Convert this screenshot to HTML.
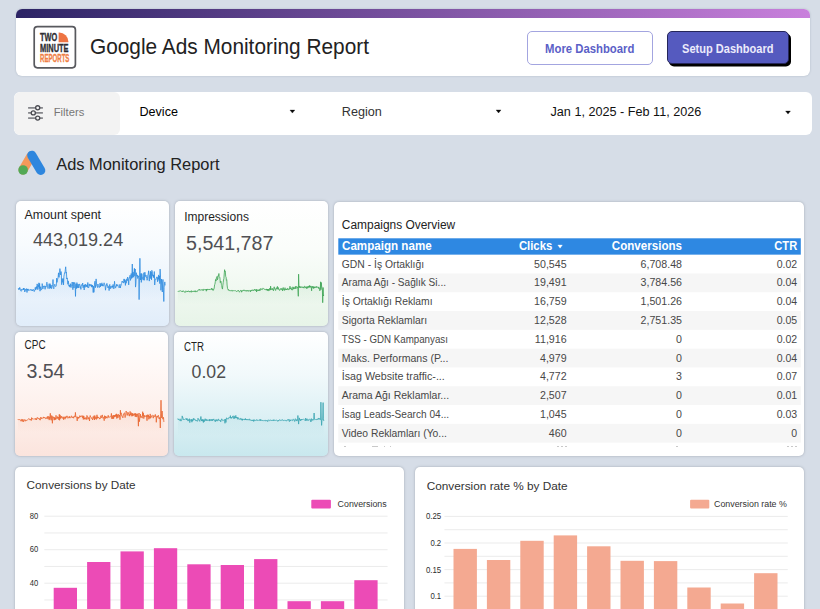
<!DOCTYPE html>
<html><head><meta charset="utf-8"><title>Google Ads Monitoring Report</title>
<style>
html,body{margin:0;padding:0}
body{width:820px;height:609px;overflow:hidden;background:#d6dde7;position:relative;font-family:"Liberation Sans",sans-serif}
.b{position:absolute;box-sizing:border-box}
.t{position:absolute;white-space:nowrap;font-family:"Liberation Sans",sans-serif}
</style></head><body>
<div class="b" style="left:16px;top:9px;width:794.3px;height:67px;background:#fff;border-radius:6px;overflow:hidden;box-shadow:0 0 2px rgba(60,70,90,.25);"><div style="height:8.5px;background:linear-gradient(90deg,#2c2465 0%,#c980dc 100%)"></div></div>
<svg class="b" style="left:32px;top:24px" width="46" height="46" viewBox="32 24 46 46">
<rect x="34.2" y="26.6" width="41.2" height="41.2" rx="3.2" fill="#fff" stroke="#58595e" stroke-width="1.7"/>
<path d="M58.6 42.2 V32.4 H59.2 A9.4 9.4 0 0 1 68.4 41.6 V42.2 Z" fill="#ee7443"/>
<g font-family="'Liberation Sans', sans-serif" font-weight="700" font-size="11.6" stroke-width=".35" paint-order="stroke">
<text x="40" y="41.4" textLength="17.2" lengthAdjust="spacingAndGlyphs" fill="#2e2e33" stroke="#2e2e33">TWO</text>
<text x="40" y="52.2" textLength="28.6" lengthAdjust="spacingAndGlyphs" fill="#2e2e33" stroke="#2e2e33">MINUTE</text>
<text x="40" y="62" textLength="29.4" lengthAdjust="spacingAndGlyphs" fill="#f07f45" stroke="#f07f45">REPORTS</text>
</g></svg>
<div class="b" style="left:527px;top:31px;width:126px;height:34px;border:1px solid #a3a5e0;border-radius:5px;background:#fff;"></div>
<div class="b" style="left:666.6px;top:31.3px;width:122.89999999999998px;height:32.7px;background:#555abf;border-radius:5px;border:1px solid #25265a;box-shadow:2px 2.5px 0 #000;"></div>
<div class="b" style="left:14px;top:91.5px;width:798px;height:43.099999999999994px;background:#fff;border-radius:6px;overflow:hidden;"><div style="width:106px;height:100%;background:#f3f3f3;border-radius:6px"></div></div>
<svg class="b" style="left:26px;top:103px" width="20" height="20" viewBox="26 103 20 20" fill="none">
<path d="M28.1 107.8H42.9M28.1 112.9H42.9M28.1 118.1H42.9" stroke="#85868b" stroke-width="1.7"/>
<g fill="#f3f3f3" stroke="#494a51" stroke-width="1.3"><circle cx="37.7" cy="107.8" r="2.05"/><circle cx="33.3" cy="112.9" r="2.05"/><circle cx="37.7" cy="118.1" r="2.05"/></g></svg>
<svg class="b" style="left:0;top:100px" width="820" height="24" viewBox="0 100 820 24"><path d="M289.95 110.05 H294.85 L292.40 113.10 Z" fill="#0a0a0a" stroke="#0a0a0a" stroke-width=".3" stroke-linejoin="round"/></svg>
<svg class="b" style="left:0;top:100px" width="820" height="24" viewBox="0 100 820 24"><path d="M496.10 109.95 H501.00 L498.55 113.00 Z" fill="#0a0a0a" stroke="#0a0a0a" stroke-width=".3" stroke-linejoin="round"/></svg>
<svg class="b" style="left:0;top:100px" width="820" height="24" viewBox="0 100 820 24"><path d="M785.55 111.05 H790.45 L788.00 114.10 Z" fill="#0a0a0a" stroke="#0a0a0a" stroke-width=".3" stroke-linejoin="round"/></svg>
<svg class="b" style="left:16px;top:148px" width="32" height="30" viewBox="16 148 32 30">
<path d="M30.9 156.4 L23.1 169.9" stroke="#f4995b" stroke-width="9.2" stroke-linecap="round"/>
<path d="M31.8 155.3 L40.7 170.3" stroke="#2e86de" stroke-width="9.2" stroke-linecap="round"/>
<circle cx="23.1" cy="170" r="4.8" fill="#52a956"/></svg>
<div class="b" style="left:15.5px;top:201px;width:153.7px;height:124.80000000000001px;box-shadow:0 0 2.5px rgba(60,68,82,.36);border-radius:5px;background:linear-gradient(180deg,#fff 0%,#f7fbfe 35%,#e1edfa 100%);"></div>
<div class="b" style="left:174.9px;top:201px;width:153.1px;height:124.80000000000001px;box-shadow:0 0 2.5px rgba(60,68,82,.36);border-radius:5px;background:linear-gradient(180deg,#fff 0%,#fafdfa 38%,#e7f4e8 100%);"></div>
<div class="b" style="left:15.3px;top:331.6px;width:153.1px;height:124.39999999999998px;box-shadow:0 0 2.5px rgba(60,68,82,.36);border-radius:5px;background:linear-gradient(180deg,#fff 0%,#fff8f6 30%,#fdeee9 70%,#fbe4dd 100%);"></div>
<div class="b" style="left:174.2px;top:332px;width:153.40000000000003px;height:124px;box-shadow:0 0 2.5px rgba(60,68,82,.36);border-radius:5px;background:linear-gradient(180deg,#fff 0%,#f1f9fb 35%,#c9e8ee 100%);"></div>
<svg class="b" style="left:0;top:0" width="820" height="609" viewBox="0 0 820 609">
<defs><linearGradient id="g11" gradientUnits="userSpaceOnUse" x1="0" y1="275.4" x2="0" y2="299.4"><stop offset="0" stop-color="#2f8be0" stop-opacity=".11"/><stop offset="1" stop-color="#2f8be0" stop-opacity="0"/></linearGradient></defs><path d="M18.3 288.4 L18.7 289.6 L19.0 288.3 L19.4 289.3 L19.7 287.4 L20.1 288.3 L20.5 290.5 L20.8 290.9 L21.2 291.3 L21.6 289.1 L21.9 289.4 L22.3 289.6 L22.6 289.8 L23.0 289.9 L23.4 288.0 L23.7 289.9 L24.1 288.2 L24.5 289.4 L24.8 292.0 L25.2 289.3 L25.5 289.2 L25.9 290.5 L26.3 289.5 L26.6 288.6 L27.0 292.5 L27.3 289.0 L27.7 290.2 L28.1 288.9 L28.4 290.5 L28.8 289.9 L29.2 290.1 L29.5 289.8 L29.9 290.4 L30.2 290.3 L30.6 289.6 L31.0 289.0 L31.3 290.0 L31.7 290.7 L32.0 290.1 L32.4 290.1 L32.8 291.0 L33.1 289.2 L33.5 289.7 L33.9 290.3 L34.2 291.6 L34.6 291.0 L34.9 289.6 L35.3 287.3 L35.7 290.0 L36.0 289.1 L36.4 286.6 L36.8 288.6 L37.1 283.9 L37.5 285.4 L37.8 289.7 L38.2 285.2 L38.6 286.7 L38.9 282.8 L39.3 288.7 L39.6 283.5 L40.0 291.2 L40.4 287.9 L40.7 286.7 L41.1 290.1 L41.5 289.5 L41.8 289.3 L42.2 283.6 L42.5 285.5 L42.9 288.9 L43.3 286.1 L43.6 286.1 L44.0 286.9 L44.4 285.8 L44.7 286.3 L45.1 289.3 L45.4 286.3 L45.8 287.3 L46.2 287.0 L46.5 283.7 L46.9 282.2 L47.2 283.7 L47.6 286.9 L48.0 288.6 L48.3 287.6 L48.7 286.3 L49.1 283.7 L49.4 284.8 L49.8 288.7 L50.1 283.7 L50.5 288.0 L50.9 285.1 L51.2 285.1 L51.6 288.7 L51.9 287.6 L52.3 286.1 L52.7 284.5 L53.0 279.5 L53.4 287.6 L53.8 288.8 L54.1 286.7 L54.5 285.6 L54.8 284.2 L55.2 286.2 L55.6 286.5 L55.9 286.5 L56.3 285.8 L56.7 278.1 L57.0 282.4 L57.4 279.4 L57.7 279.4 L58.1 277.2 L58.5 272.8 L58.8 277.1 L59.2 277.3 L59.5 272.7 L59.9 268.6 L60.3 271.9 L60.6 274.9 L61.0 271.5 L61.4 273.2 L61.7 284.7 L62.1 278.6 L62.4 281.8 L62.8 282.4 L63.2 278.5 L63.5 284.9 L63.9 276.2 L64.3 274.2 L64.6 272.7 L65.0 273.2 L65.3 269.7 L65.7 266.8 L66.1 272.7 L66.4 272.0 L66.8 279.1 L67.1 277.9 L67.5 279.4 L67.9 284.3 L68.2 280.9 L68.6 283.1 L69.0 286.2 L69.3 285.0 L69.7 287.0 L70.0 287.1 L70.4 283.7 L70.8 287.3 L71.1 287.6 L71.5 284.8 L71.8 284.9 L72.2 282.0 L72.6 286.5 L72.9 289.7 L73.3 282.2 L73.7 284.8 L74.0 288.0 L74.4 284.2 L74.7 282.4 L75.1 283.5 L75.5 296.4 L75.8 285.0 L76.2 283.9 L76.6 288.6 L76.9 282.6 L77.3 285.4 L77.6 287.8 L78.0 284.1 L78.4 286.1 L78.7 288.0 L79.1 284.2 L79.4 283.9 L79.8 285.0 L80.2 287.5 L80.5 286.7 L80.9 289.4 L81.3 284.6 L81.6 285.2 L82.0 285.4 L82.3 285.5 L82.7 283.0 L83.1 287.8 L83.4 285.5 L83.8 285.2 L84.2 290.0 L84.5 284.7 L84.9 287.2 L85.2 287.3 L85.6 284.2 L86.0 286.1 L86.3 286.8 L86.7 284.9 L87.0 286.3 L87.4 287.2 L87.8 282.5 L88.1 288.0 L88.5 287.5 L88.9 287.5 L89.2 283.9 L89.6 285.5 L89.9 284.8 L90.3 285.7 L90.7 284.5 L91.0 284.2 L91.4 286.8 L91.7 284.9 L92.1 287.3 L92.5 285.1 L92.8 287.3 L93.2 292.5 L93.6 286.2 L93.9 292.3 L94.3 287.0 L94.6 282.5 L95.0 281.2 L95.4 287.7 L95.7 284.4 L96.1 278.9 L96.5 283.0 L96.8 286.0 L97.2 286.6 L97.5 287.5 L97.9 284.0 L98.3 285.4 L98.6 286.6 L99.0 287.3 L99.3 287.7 L99.7 285.8 L100.1 283.1 L100.4 286.9 L100.8 284.2 L101.2 285.8 L101.5 285.1 L101.9 282.8 L102.2 286.1 L102.6 284.3 L103.0 285.9 L103.3 286.2 L103.7 285.2 L104.1 282.8 L104.4 284.5 L104.8 285.0 L105.1 286.0 L105.5 290.2 L105.9 287.0 L106.2 284.6 L106.6 285.2 L106.9 283.4 L107.3 286.2 L107.7 285.6 L108.0 288.0 L108.4 286.4 L108.8 286.8 L109.1 290.6 L109.5 285.1 L109.8 284.4 L110.2 288.9 L110.6 286.3 L110.9 286.7 L111.3 286.3 L111.7 286.2 L112.0 288.2 L112.4 285.8 L112.7 287.0 L113.1 284.4 L113.5 285.8 L113.8 288.9 L114.2 286.3 L114.5 281.3 L114.9 284.7 L115.3 287.5 L115.6 288.1 L116.0 286.0 L116.4 286.1 L116.7 284.2 L117.1 286.1 L117.4 285.2 L117.8 284.7 L118.2 286.3 L118.5 286.7 L118.9 287.4 L119.2 287.9 L119.6 285.2 L120.0 284.3 L120.3 288.0 L120.7 286.0 L121.1 285.3 L121.4 283.4 L121.8 283.0 L122.1 281.0 L122.5 282.0 L122.9 281.9 L123.2 282.3 L123.6 283.1 L124.0 278.9 L124.3 282.3 L124.7 279.4 L125.0 279.9 L125.4 285.4 L125.8 280.4 L126.1 283.3 L126.5 282.7 L126.8 278.8 L127.2 280.8 L127.6 277.0 L127.9 277.6 L128.3 279.0 L128.7 284.9 L129.0 279.3 L129.4 278.2 L129.7 276.7 L130.1 275.2 L130.5 280.4 L130.8 278.6 L131.2 273.5 L131.6 278.5 L131.9 275.6 L132.3 264.0 L132.6 277.6 L133.0 272.0 L133.4 273.9 L133.7 277.2 L134.1 270.7 L134.4 268.3 L134.8 275.9 L135.2 269.0 L135.5 287.1 L135.9 283.8 L136.3 272.7 L136.6 274.7 L137.0 276.3 L137.3 274.9 L137.7 278.5 L138.1 277.4 L138.4 275.8 L138.8 277.9 L139.1 299.6 L139.5 277.3 L139.9 258.3 L140.2 272.4 L140.6 280.0 L141.0 273.6 L141.3 282.4 L141.7 273.5 L142.0 274.2 L142.4 278.5 L142.8 277.6 L143.1 280.1 L143.5 278.4 L143.9 272.7 L144.2 280.3 L144.6 274.4 L144.9 272.2 L145.3 275.1 L145.7 276.6 L146.0 275.1 L146.4 277.4 L146.7 277.0 L147.1 280.3 L147.5 278.6 L147.8 274.8 L148.2 274.3 L148.6 270.8 L148.9 275.6 L149.3 281.1 L149.6 275.3 L150.0 275.4 L150.4 271.2 L150.7 278.6 L151.1 272.0 L151.5 279.8 L151.8 270.3 L152.2 271.2 L152.5 275.6 L152.9 274.7 L153.3 277.3 L153.6 275.0 L154.0 277.8 L154.3 271.5 L154.7 285.0 L155.1 280.1 L155.4 279.6 L155.8 279.9 L156.2 277.9 L156.5 278.0 L156.9 276.8 L157.2 276.9 L157.6 281.8 L158.0 277.6 L158.3 279.0 L158.7 274.9 L159.0 280.5 L159.4 276.0 L159.8 283.6 L160.1 269.1 L160.5 277.2 L160.9 290.3 L161.2 285.9 L161.6 279.0 L161.9 282.9 L162.3 292.0 L162.7 281.8 L163.0 279.5 L163.4 289.9 L163.8 301.5 L164.1 287.3 L164.5 284.0 L164.8 281.9 L165.2 285.4 L165.2 312 L18.3 312 Z" fill="url(#g11)" stroke="none"/><path d="M18.3 288.4 L18.7 289.6 L19.0 288.3 L19.4 289.3 L19.7 287.4 L20.1 288.3 L20.5 290.5 L20.8 290.9 L21.2 291.3 L21.6 289.1 L21.9 289.4 L22.3 289.6 L22.6 289.8 L23.0 289.9 L23.4 288.0 L23.7 289.9 L24.1 288.2 L24.5 289.4 L24.8 292.0 L25.2 289.3 L25.5 289.2 L25.9 290.5 L26.3 289.5 L26.6 288.6 L27.0 292.5 L27.3 289.0 L27.7 290.2 L28.1 288.9 L28.4 290.5 L28.8 289.9 L29.2 290.1 L29.5 289.8 L29.9 290.4 L30.2 290.3 L30.6 289.6 L31.0 289.0 L31.3 290.0 L31.7 290.7 L32.0 290.1 L32.4 290.1 L32.8 291.0 L33.1 289.2 L33.5 289.7 L33.9 290.3 L34.2 291.6 L34.6 291.0 L34.9 289.6 L35.3 287.3 L35.7 290.0 L36.0 289.1 L36.4 286.6 L36.8 288.6 L37.1 283.9 L37.5 285.4 L37.8 289.7 L38.2 285.2 L38.6 286.7 L38.9 282.8 L39.3 288.7 L39.6 283.5 L40.0 291.2 L40.4 287.9 L40.7 286.7 L41.1 290.1 L41.5 289.5 L41.8 289.3 L42.2 283.6 L42.5 285.5 L42.9 288.9 L43.3 286.1 L43.6 286.1 L44.0 286.9 L44.4 285.8 L44.7 286.3 L45.1 289.3 L45.4 286.3 L45.8 287.3 L46.2 287.0 L46.5 283.7 L46.9 282.2 L47.2 283.7 L47.6 286.9 L48.0 288.6 L48.3 287.6 L48.7 286.3 L49.1 283.7 L49.4 284.8 L49.8 288.7 L50.1 283.7 L50.5 288.0 L50.9 285.1 L51.2 285.1 L51.6 288.7 L51.9 287.6 L52.3 286.1 L52.7 284.5 L53.0 279.5 L53.4 287.6 L53.8 288.8 L54.1 286.7 L54.5 285.6 L54.8 284.2 L55.2 286.2 L55.6 286.5 L55.9 286.5 L56.3 285.8 L56.7 278.1 L57.0 282.4 L57.4 279.4 L57.7 279.4 L58.1 277.2 L58.5 272.8 L58.8 277.1 L59.2 277.3 L59.5 272.7 L59.9 268.6 L60.3 271.9 L60.6 274.9 L61.0 271.5 L61.4 273.2 L61.7 284.7 L62.1 278.6 L62.4 281.8 L62.8 282.4 L63.2 278.5 L63.5 284.9 L63.9 276.2 L64.3 274.2 L64.6 272.7 L65.0 273.2 L65.3 269.7 L65.7 266.8 L66.1 272.7 L66.4 272.0 L66.8 279.1 L67.1 277.9 L67.5 279.4 L67.9 284.3 L68.2 280.9 L68.6 283.1 L69.0 286.2 L69.3 285.0 L69.7 287.0 L70.0 287.1 L70.4 283.7 L70.8 287.3 L71.1 287.6 L71.5 284.8 L71.8 284.9 L72.2 282.0 L72.6 286.5 L72.9 289.7 L73.3 282.2 L73.7 284.8 L74.0 288.0 L74.4 284.2 L74.7 282.4 L75.1 283.5 L75.5 296.4 L75.8 285.0 L76.2 283.9 L76.6 288.6 L76.9 282.6 L77.3 285.4 L77.6 287.8 L78.0 284.1 L78.4 286.1 L78.7 288.0 L79.1 284.2 L79.4 283.9 L79.8 285.0 L80.2 287.5 L80.5 286.7 L80.9 289.4 L81.3 284.6 L81.6 285.2 L82.0 285.4 L82.3 285.5 L82.7 283.0 L83.1 287.8 L83.4 285.5 L83.8 285.2 L84.2 290.0 L84.5 284.7 L84.9 287.2 L85.2 287.3 L85.6 284.2 L86.0 286.1 L86.3 286.8 L86.7 284.9 L87.0 286.3 L87.4 287.2 L87.8 282.5 L88.1 288.0 L88.5 287.5 L88.9 287.5 L89.2 283.9 L89.6 285.5 L89.9 284.8 L90.3 285.7 L90.7 284.5 L91.0 284.2 L91.4 286.8 L91.7 284.9 L92.1 287.3 L92.5 285.1 L92.8 287.3 L93.2 292.5 L93.6 286.2 L93.9 292.3 L94.3 287.0 L94.6 282.5 L95.0 281.2 L95.4 287.7 L95.7 284.4 L96.1 278.9 L96.5 283.0 L96.8 286.0 L97.2 286.6 L97.5 287.5 L97.9 284.0 L98.3 285.4 L98.6 286.6 L99.0 287.3 L99.3 287.7 L99.7 285.8 L100.1 283.1 L100.4 286.9 L100.8 284.2 L101.2 285.8 L101.5 285.1 L101.9 282.8 L102.2 286.1 L102.6 284.3 L103.0 285.9 L103.3 286.2 L103.7 285.2 L104.1 282.8 L104.4 284.5 L104.8 285.0 L105.1 286.0 L105.5 290.2 L105.9 287.0 L106.2 284.6 L106.6 285.2 L106.9 283.4 L107.3 286.2 L107.7 285.6 L108.0 288.0 L108.4 286.4 L108.8 286.8 L109.1 290.6 L109.5 285.1 L109.8 284.4 L110.2 288.9 L110.6 286.3 L110.9 286.7 L111.3 286.3 L111.7 286.2 L112.0 288.2 L112.4 285.8 L112.7 287.0 L113.1 284.4 L113.5 285.8 L113.8 288.9 L114.2 286.3 L114.5 281.3 L114.9 284.7 L115.3 287.5 L115.6 288.1 L116.0 286.0 L116.4 286.1 L116.7 284.2 L117.1 286.1 L117.4 285.2 L117.8 284.7 L118.2 286.3 L118.5 286.7 L118.9 287.4 L119.2 287.9 L119.6 285.2 L120.0 284.3 L120.3 288.0 L120.7 286.0 L121.1 285.3 L121.4 283.4 L121.8 283.0 L122.1 281.0 L122.5 282.0 L122.9 281.9 L123.2 282.3 L123.6 283.1 L124.0 278.9 L124.3 282.3 L124.7 279.4 L125.0 279.9 L125.4 285.4 L125.8 280.4 L126.1 283.3 L126.5 282.7 L126.8 278.8 L127.2 280.8 L127.6 277.0 L127.9 277.6 L128.3 279.0 L128.7 284.9 L129.0 279.3 L129.4 278.2 L129.7 276.7 L130.1 275.2 L130.5 280.4 L130.8 278.6 L131.2 273.5 L131.6 278.5 L131.9 275.6 L132.3 264.0 L132.6 277.6 L133.0 272.0 L133.4 273.9 L133.7 277.2 L134.1 270.7 L134.4 268.3 L134.8 275.9 L135.2 269.0 L135.5 287.1 L135.9 283.8 L136.3 272.7 L136.6 274.7 L137.0 276.3 L137.3 274.9 L137.7 278.5 L138.1 277.4 L138.4 275.8 L138.8 277.9 L139.1 299.6 L139.5 277.3 L139.9 258.3 L140.2 272.4 L140.6 280.0 L141.0 273.6 L141.3 282.4 L141.7 273.5 L142.0 274.2 L142.4 278.5 L142.8 277.6 L143.1 280.1 L143.5 278.4 L143.9 272.7 L144.2 280.3 L144.6 274.4 L144.9 272.2 L145.3 275.1 L145.7 276.6 L146.0 275.1 L146.4 277.4 L146.7 277.0 L147.1 280.3 L147.5 278.6 L147.8 274.8 L148.2 274.3 L148.6 270.8 L148.9 275.6 L149.3 281.1 L149.6 275.3 L150.0 275.4 L150.4 271.2 L150.7 278.6 L151.1 272.0 L151.5 279.8 L151.8 270.3 L152.2 271.2 L152.5 275.6 L152.9 274.7 L153.3 277.3 L153.6 275.0 L154.0 277.8 L154.3 271.5 L154.7 285.0 L155.1 280.1 L155.4 279.6 L155.8 279.9 L156.2 277.9 L156.5 278.0 L156.9 276.8 L157.2 276.9 L157.6 281.8 L158.0 277.6 L158.3 279.0 L158.7 274.9 L159.0 280.5 L159.4 276.0 L159.8 283.6 L160.1 269.1 L160.5 277.2 L160.9 290.3 L161.2 285.9 L161.6 279.0 L161.9 282.9 L162.3 292.0 L162.7 281.8 L163.0 279.5 L163.4 289.9 L163.8 301.5 L164.1 287.3 L164.5 284.0 L164.8 281.9 L165.2 285.4" fill="none" stroke="#2f8be0" stroke-width="0.8" stroke-linejoin="round"/>
<defs><linearGradient id="g22" gradientUnits="userSpaceOnUse" x1="0" y1="280.6" x2="0" y2="304.6"><stop offset="0" stop-color="#3fa556" stop-opacity=".11"/><stop offset="1" stop-color="#3fa556" stop-opacity="0"/></linearGradient></defs><path d="M177.9 291.7 L178.3 291.1 L178.6 291.3 L179.0 291.4 L179.3 291.5 L179.7 291.0 L180.1 290.4 L180.4 290.7 L180.8 291.2 L181.1 291.1 L181.5 291.2 L181.9 291.6 L182.2 292.0 L182.6 291.0 L182.9 291.1 L183.3 290.7 L183.6 291.0 L184.0 292.0 L184.4 291.9 L184.7 292.0 L185.1 292.5 L185.4 291.5 L185.8 290.8 L186.2 291.4 L186.5 291.7 L186.9 291.2 L187.2 291.2 L187.6 292.0 L188.0 290.9 L188.3 290.9 L188.7 291.1 L189.0 291.8 L189.4 292.0 L189.8 291.1 L190.1 291.7 L190.5 291.3 L190.8 291.3 L191.2 292.3 L191.6 290.7 L191.9 291.3 L192.3 291.5 L192.6 291.4 L193.0 292.0 L193.4 291.3 L193.7 290.9 L194.1 291.5 L194.4 290.8 L194.8 291.7 L195.1 291.8 L195.5 290.7 L195.9 292.1 L196.2 291.5 L196.6 291.4 L196.9 291.4 L197.3 291.6 L197.7 290.8 L198.0 289.9 L198.4 290.1 L198.7 289.7 L199.1 290.0 L199.5 289.3 L199.8 290.4 L200.2 290.2 L200.5 290.0 L200.9 289.9 L201.3 290.2 L201.6 289.6 L202.0 289.2 L202.3 289.6 L202.7 289.8 L203.1 290.8 L203.4 289.2 L203.8 289.5 L204.1 289.4 L204.5 289.6 L204.9 289.5 L205.2 289.8 L205.6 289.3 L205.9 289.0 L206.3 291.2 L206.6 289.0 L207.0 290.0 L207.4 290.0 L207.7 289.1 L208.1 289.2 L208.4 289.4 L208.8 289.8 L209.2 289.0 L209.5 289.8 L209.9 289.4 L210.2 289.5 L210.6 288.9 L211.0 289.5 L211.3 289.5 L211.7 288.1 L212.0 289.2 L212.4 289.8 L212.8 288.8 L213.1 290.5 L213.5 289.5 L213.8 289.5 L214.2 288.1 L214.6 284.7 L214.9 284.5 L215.3 281.5 L215.6 279.5 L216.0 281.1 L216.4 277.7 L216.7 277.2 L217.1 276.4 L217.4 279.8 L217.8 278.6 L218.1 275.5 L218.5 275.8 L218.9 273.5 L219.2 276.8 L219.6 277.4 L219.9 277.4 L220.3 282.7 L220.7 281.2 L221.0 281.1 L221.4 284.4 L221.7 285.4 L222.1 288.1 L222.5 289.1 L222.8 285.6 L223.2 282.6 L223.5 280.0 L223.9 278.5 L224.3 272.9 L224.6 269.7 L225.0 271.9 L225.3 271.4 L225.7 276.4 L226.1 277.2 L226.4 280.3 L226.8 279.8 L227.1 285.0 L227.5 288.3 L227.9 289.1 L228.2 290.1 L228.6 289.5 L228.9 290.6 L229.3 290.7 L229.6 290.1 L230.0 290.5 L230.4 290.8 L230.7 290.5 L231.1 290.3 L231.4 290.5 L231.8 290.4 L232.2 291.3 L232.5 290.5 L232.9 290.5 L233.2 290.7 L233.6 290.6 L234.0 290.8 L234.3 290.5 L234.7 290.8 L235.0 290.9 L235.4 290.7 L235.8 290.8 L236.1 291.2 L236.5 291.5 L236.8 291.0 L237.2 290.9 L237.6 291.1 L237.9 290.9 L238.3 290.1 L238.6 290.9 L239.0 291.4 L239.4 292.2 L239.7 291.4 L240.1 291.0 L240.4 290.4 L240.8 290.4 L241.1 290.8 L241.5 292.2 L241.9 290.4 L242.2 291.1 L242.6 291.1 L242.9 290.4 L243.3 290.4 L243.7 290.6 L244.0 289.8 L244.4 290.8 L244.7 290.9 L245.1 290.3 L245.5 290.7 L245.8 290.4 L246.2 291.4 L246.5 290.8 L246.9 290.1 L247.3 290.8 L247.6 290.6 L248.0 291.3 L248.3 290.4 L248.7 291.2 L249.1 291.0 L249.4 290.8 L249.8 290.5 L250.1 290.7 L250.5 291.8 L250.9 290.0 L251.2 290.7 L251.6 289.9 L251.9 290.7 L252.3 290.4 L252.6 290.5 L253.0 289.7 L253.4 290.3 L253.7 290.8 L254.1 289.9 L254.4 289.7 L254.8 289.1 L255.2 290.6 L255.5 290.5 L255.9 290.5 L256.2 289.2 L256.6 292.0 L257.0 289.6 L257.3 290.6 L257.7 290.0 L258.0 290.3 L258.4 291.0 L258.8 289.5 L259.1 289.3 L259.5 289.4 L259.8 291.0 L260.2 289.6 L260.6 288.6 L260.9 289.6 L261.3 288.8 L261.6 289.3 L262.0 289.6 L262.3 289.6 L262.7 288.4 L263.1 288.7 L263.4 288.3 L263.8 288.6 L264.1 289.2 L264.5 289.3 L264.9 289.1 L265.2 289.7 L265.6 289.7 L265.9 289.6 L266.3 288.9 L266.7 290.2 L267.0 289.0 L267.4 290.5 L267.7 289.0 L268.1 290.6 L268.5 289.1 L268.8 290.8 L269.2 290.6 L269.5 290.0 L269.9 288.1 L270.3 290.1 L270.6 286.1 L271.0 289.5 L271.3 289.0 L271.7 289.5 L272.1 288.3 L272.4 289.5 L272.8 288.7 L273.1 290.1 L273.5 290.8 L273.8 288.7 L274.2 286.8 L274.6 288.7 L274.9 288.6 L275.3 289.9 L275.6 290.5 L276.0 288.5 L276.4 287.7 L276.7 288.9 L277.1 289.3 L277.4 286.4 L277.8 289.0 L278.2 288.6 L278.5 287.6 L278.9 289.8 L279.2 289.4 L279.6 290.5 L280.0 289.6 L280.3 289.5 L280.7 289.3 L281.0 288.2 L281.4 289.5 L281.8 289.5 L282.1 288.6 L282.5 290.9 L282.8 289.1 L283.2 287.5 L283.6 289.6 L283.9 290.2 L284.3 289.4 L284.6 290.4 L285.0 287.7 L285.3 289.7 L285.7 289.4 L286.1 290.0 L286.4 289.0 L286.8 289.8 L287.1 288.4 L287.5 288.4 L287.9 289.8 L288.2 289.9 L288.6 288.8 L288.9 289.1 L289.3 289.4 L289.7 287.3 L290.0 286.2 L290.4 289.1 L290.7 288.1 L291.1 287.6 L291.5 289.5 L291.8 288.8 L292.2 290.2 L292.5 288.3 L292.9 286.8 L293.3 287.6 L293.6 289.2 L294.0 287.3 L294.3 288.9 L294.7 288.5 L295.1 287.3 L295.4 286.3 L295.8 288.9 L296.1 287.3 L296.5 286.6 L296.8 286.3 L297.2 288.1 L297.6 287.3 L297.9 287.9 L298.3 296.3 L298.6 274.2 L299.0 287.7 L299.4 286.1 L299.7 287.5 L300.1 286.7 L300.4 286.6 L300.8 288.0 L301.2 287.2 L301.5 287.1 L301.9 286.6 L302.2 287.5 L302.6 287.2 L303.0 287.8 L303.3 287.0 L303.7 287.0 L304.0 288.2 L304.4 286.2 L304.8 286.2 L305.1 286.7 L305.5 287.6 L305.8 288.1 L306.2 286.7 L306.6 288.6 L306.9 288.0 L307.3 286.4 L307.6 288.2 L308.0 287.9 L308.3 287.7 L308.7 286.1 L309.1 287.5 L309.4 285.5 L309.8 287.2 L310.1 285.8 L310.5 287.3 L310.9 286.4 L311.2 286.3 L311.6 290.8 L311.9 287.0 L312.3 286.1 L312.7 287.8 L313.0 288.1 L313.4 286.6 L313.7 288.6 L314.1 286.6 L314.5 288.0 L314.8 287.2 L315.2 286.9 L315.5 287.6 L315.9 286.8 L316.3 286.3 L316.6 287.6 L317.0 286.8 L317.3 287.2 L317.7 287.2 L318.1 287.5 L318.4 286.9 L318.8 288.7 L319.1 287.6 L319.5 288.3 L319.8 290.8 L320.2 289.7 L320.6 281.8 L320.9 289.7 L321.3 282.5 L321.6 286.1 L322.0 288.0 L322.4 290.0 L322.7 302.7 L323.1 287.5 L323.4 296.0 L323.8 294.9 L323.8 312 L177.9 312 Z" fill="url(#g22)" stroke="none"/><path d="M177.9 291.7 L178.3 291.1 L178.6 291.3 L179.0 291.4 L179.3 291.5 L179.7 291.0 L180.1 290.4 L180.4 290.7 L180.8 291.2 L181.1 291.1 L181.5 291.2 L181.9 291.6 L182.2 292.0 L182.6 291.0 L182.9 291.1 L183.3 290.7 L183.6 291.0 L184.0 292.0 L184.4 291.9 L184.7 292.0 L185.1 292.5 L185.4 291.5 L185.8 290.8 L186.2 291.4 L186.5 291.7 L186.9 291.2 L187.2 291.2 L187.6 292.0 L188.0 290.9 L188.3 290.9 L188.7 291.1 L189.0 291.8 L189.4 292.0 L189.8 291.1 L190.1 291.7 L190.5 291.3 L190.8 291.3 L191.2 292.3 L191.6 290.7 L191.9 291.3 L192.3 291.5 L192.6 291.4 L193.0 292.0 L193.4 291.3 L193.7 290.9 L194.1 291.5 L194.4 290.8 L194.8 291.7 L195.1 291.8 L195.5 290.7 L195.9 292.1 L196.2 291.5 L196.6 291.4 L196.9 291.4 L197.3 291.6 L197.7 290.8 L198.0 289.9 L198.4 290.1 L198.7 289.7 L199.1 290.0 L199.5 289.3 L199.8 290.4 L200.2 290.2 L200.5 290.0 L200.9 289.9 L201.3 290.2 L201.6 289.6 L202.0 289.2 L202.3 289.6 L202.7 289.8 L203.1 290.8 L203.4 289.2 L203.8 289.5 L204.1 289.4 L204.5 289.6 L204.9 289.5 L205.2 289.8 L205.6 289.3 L205.9 289.0 L206.3 291.2 L206.6 289.0 L207.0 290.0 L207.4 290.0 L207.7 289.1 L208.1 289.2 L208.4 289.4 L208.8 289.8 L209.2 289.0 L209.5 289.8 L209.9 289.4 L210.2 289.5 L210.6 288.9 L211.0 289.5 L211.3 289.5 L211.7 288.1 L212.0 289.2 L212.4 289.8 L212.8 288.8 L213.1 290.5 L213.5 289.5 L213.8 289.5 L214.2 288.1 L214.6 284.7 L214.9 284.5 L215.3 281.5 L215.6 279.5 L216.0 281.1 L216.4 277.7 L216.7 277.2 L217.1 276.4 L217.4 279.8 L217.8 278.6 L218.1 275.5 L218.5 275.8 L218.9 273.5 L219.2 276.8 L219.6 277.4 L219.9 277.4 L220.3 282.7 L220.7 281.2 L221.0 281.1 L221.4 284.4 L221.7 285.4 L222.1 288.1 L222.5 289.1 L222.8 285.6 L223.2 282.6 L223.5 280.0 L223.9 278.5 L224.3 272.9 L224.6 269.7 L225.0 271.9 L225.3 271.4 L225.7 276.4 L226.1 277.2 L226.4 280.3 L226.8 279.8 L227.1 285.0 L227.5 288.3 L227.9 289.1 L228.2 290.1 L228.6 289.5 L228.9 290.6 L229.3 290.7 L229.6 290.1 L230.0 290.5 L230.4 290.8 L230.7 290.5 L231.1 290.3 L231.4 290.5 L231.8 290.4 L232.2 291.3 L232.5 290.5 L232.9 290.5 L233.2 290.7 L233.6 290.6 L234.0 290.8 L234.3 290.5 L234.7 290.8 L235.0 290.9 L235.4 290.7 L235.8 290.8 L236.1 291.2 L236.5 291.5 L236.8 291.0 L237.2 290.9 L237.6 291.1 L237.9 290.9 L238.3 290.1 L238.6 290.9 L239.0 291.4 L239.4 292.2 L239.7 291.4 L240.1 291.0 L240.4 290.4 L240.8 290.4 L241.1 290.8 L241.5 292.2 L241.9 290.4 L242.2 291.1 L242.6 291.1 L242.9 290.4 L243.3 290.4 L243.7 290.6 L244.0 289.8 L244.4 290.8 L244.7 290.9 L245.1 290.3 L245.5 290.7 L245.8 290.4 L246.2 291.4 L246.5 290.8 L246.9 290.1 L247.3 290.8 L247.6 290.6 L248.0 291.3 L248.3 290.4 L248.7 291.2 L249.1 291.0 L249.4 290.8 L249.8 290.5 L250.1 290.7 L250.5 291.8 L250.9 290.0 L251.2 290.7 L251.6 289.9 L251.9 290.7 L252.3 290.4 L252.6 290.5 L253.0 289.7 L253.4 290.3 L253.7 290.8 L254.1 289.9 L254.4 289.7 L254.8 289.1 L255.2 290.6 L255.5 290.5 L255.9 290.5 L256.2 289.2 L256.6 292.0 L257.0 289.6 L257.3 290.6 L257.7 290.0 L258.0 290.3 L258.4 291.0 L258.8 289.5 L259.1 289.3 L259.5 289.4 L259.8 291.0 L260.2 289.6 L260.6 288.6 L260.9 289.6 L261.3 288.8 L261.6 289.3 L262.0 289.6 L262.3 289.6 L262.7 288.4 L263.1 288.7 L263.4 288.3 L263.8 288.6 L264.1 289.2 L264.5 289.3 L264.9 289.1 L265.2 289.7 L265.6 289.7 L265.9 289.6 L266.3 288.9 L266.7 290.2 L267.0 289.0 L267.4 290.5 L267.7 289.0 L268.1 290.6 L268.5 289.1 L268.8 290.8 L269.2 290.6 L269.5 290.0 L269.9 288.1 L270.3 290.1 L270.6 286.1 L271.0 289.5 L271.3 289.0 L271.7 289.5 L272.1 288.3 L272.4 289.5 L272.8 288.7 L273.1 290.1 L273.5 290.8 L273.8 288.7 L274.2 286.8 L274.6 288.7 L274.9 288.6 L275.3 289.9 L275.6 290.5 L276.0 288.5 L276.4 287.7 L276.7 288.9 L277.1 289.3 L277.4 286.4 L277.8 289.0 L278.2 288.6 L278.5 287.6 L278.9 289.8 L279.2 289.4 L279.6 290.5 L280.0 289.6 L280.3 289.5 L280.7 289.3 L281.0 288.2 L281.4 289.5 L281.8 289.5 L282.1 288.6 L282.5 290.9 L282.8 289.1 L283.2 287.5 L283.6 289.6 L283.9 290.2 L284.3 289.4 L284.6 290.4 L285.0 287.7 L285.3 289.7 L285.7 289.4 L286.1 290.0 L286.4 289.0 L286.8 289.8 L287.1 288.4 L287.5 288.4 L287.9 289.8 L288.2 289.9 L288.6 288.8 L288.9 289.1 L289.3 289.4 L289.7 287.3 L290.0 286.2 L290.4 289.1 L290.7 288.1 L291.1 287.6 L291.5 289.5 L291.8 288.8 L292.2 290.2 L292.5 288.3 L292.9 286.8 L293.3 287.6 L293.6 289.2 L294.0 287.3 L294.3 288.9 L294.7 288.5 L295.1 287.3 L295.4 286.3 L295.8 288.9 L296.1 287.3 L296.5 286.6 L296.8 286.3 L297.2 288.1 L297.6 287.3 L297.9 287.9 L298.3 296.3 L298.6 274.2 L299.0 287.7 L299.4 286.1 L299.7 287.5 L300.1 286.7 L300.4 286.6 L300.8 288.0 L301.2 287.2 L301.5 287.1 L301.9 286.6 L302.2 287.5 L302.6 287.2 L303.0 287.8 L303.3 287.0 L303.7 287.0 L304.0 288.2 L304.4 286.2 L304.8 286.2 L305.1 286.7 L305.5 287.6 L305.8 288.1 L306.2 286.7 L306.6 288.6 L306.9 288.0 L307.3 286.4 L307.6 288.2 L308.0 287.9 L308.3 287.7 L308.7 286.1 L309.1 287.5 L309.4 285.5 L309.8 287.2 L310.1 285.8 L310.5 287.3 L310.9 286.4 L311.2 286.3 L311.6 290.8 L311.9 287.0 L312.3 286.1 L312.7 287.8 L313.0 288.1 L313.4 286.6 L313.7 288.6 L314.1 286.6 L314.5 288.0 L314.8 287.2 L315.2 286.9 L315.5 287.6 L315.9 286.8 L316.3 286.3 L316.6 287.6 L317.0 286.8 L317.3 287.2 L317.7 287.2 L318.1 287.5 L318.4 286.9 L318.8 288.7 L319.1 287.6 L319.5 288.3 L319.8 290.8 L320.2 289.7 L320.6 281.8 L320.9 289.7 L321.3 282.5 L321.6 286.1 L322.0 288.0 L322.4 290.0 L322.7 302.7 L323.1 287.5 L323.4 296.0 L323.8 294.9" fill="none" stroke="#3fa556" stroke-width="0.8" stroke-linejoin="round"/>
<defs><linearGradient id="g33" gradientUnits="userSpaceOnUse" x1="0" y1="409.2" x2="0" y2="433.2"><stop offset="0" stop-color="#e8652e" stop-opacity=".11"/><stop offset="1" stop-color="#e8652e" stop-opacity="0"/></linearGradient></defs><path d="M17.9 419.6 L18.3 420.0 L18.6 419.6 L19.0 419.3 L19.3 419.8 L19.7 419.6 L20.1 419.6 L20.4 420.1 L20.8 420.0 L21.1 421.3 L21.5 419.4 L21.9 419.5 L22.2 420.8 L22.6 419.4 L22.9 421.7 L23.3 420.6 L23.7 421.7 L24.0 419.4 L24.4 420.0 L24.7 420.4 L25.1 419.7 L25.5 421.1 L25.8 421.1 L26.2 420.1 L26.5 420.4 L26.9 420.1 L27.2 420.2 L27.6 419.9 L28.0 419.3 L28.3 419.1 L28.7 418.6 L29.0 419.1 L29.4 419.0 L29.8 419.8 L30.1 419.7 L30.5 419.5 L30.8 419.0 L31.2 420.6 L31.6 417.6 L31.9 419.4 L32.3 418.5 L32.6 418.6 L33.0 418.7 L33.4 419.1 L33.7 419.0 L34.1 419.0 L34.4 418.8 L34.8 419.2 L35.2 418.5 L35.5 418.5 L35.9 419.9 L36.2 418.5 L36.6 419.8 L37.0 418.1 L37.3 417.4 L37.7 418.4 L38.0 418.5 L38.4 418.7 L38.8 418.0 L39.1 418.1 L39.5 419.5 L39.8 418.8 L40.2 420.2 L40.6 418.2 L40.9 417.0 L41.3 418.9 L41.6 418.3 L42.0 418.2 L42.4 418.2 L42.7 418.4 L43.1 418.0 L43.4 416.9 L43.8 418.2 L44.2 418.0 L44.5 417.2 L44.9 417.7 L45.2 417.6 L45.6 418.8 L45.9 419.0 L46.3 418.6 L46.7 417.6 L47.0 418.3 L47.4 416.4 L47.7 418.9 L48.1 418.9 L48.5 418.5 L48.8 416.2 L49.2 420.1 L49.5 417.2 L49.9 418.6 L50.3 413.3 L50.6 418.1 L51.0 420.3 L51.3 420.1 L51.7 415.5 L52.1 419.8 L52.4 423.3 L52.8 416.4 L53.1 418.2 L53.5 417.4 L53.9 418.6 L54.2 420.2 L54.6 417.3 L54.9 419.7 L55.3 417.9 L55.7 419.6 L56.0 415.3 L56.4 418.1 L56.7 418.7 L57.1 418.4 L57.5 416.6 L57.8 418.6 L58.2 417.7 L58.5 417.1 L58.9 419.9 L59.3 414.3 L59.6 420.3 L60.0 414.9 L60.3 416.4 L60.7 418.7 L61.1 416.1 L61.4 417.6 L61.8 416.6 L62.1 417.3 L62.5 417.7 L62.9 418.5 L63.2 416.8 L63.6 419.7 L63.9 417.8 L64.3 416.8 L64.6 417.6 L65.0 419.2 L65.4 416.8 L65.7 418.1 L66.1 416.6 L66.4 417.3 L66.8 415.9 L67.2 416.0 L67.5 416.3 L67.9 418.3 L68.2 417.8 L68.6 417.2 L69.0 416.6 L69.3 418.1 L69.7 416.4 L70.0 417.4 L70.4 417.7 L70.8 417.6 L71.1 417.1 L71.5 415.8 L71.8 416.5 L72.2 418.0 L72.6 417.4 L72.9 416.9 L73.3 416.8 L73.6 418.2 L74.0 416.6 L74.4 416.3 L74.7 415.9 L75.1 417.1 L75.4 412.4 L75.8 416.7 L76.2 416.8 L76.5 416.8 L76.9 418.0 L77.2 420.9 L77.6 416.9 L78.0 416.9 L78.3 418.5 L78.7 417.2 L79.0 418.1 L79.4 416.9 L79.8 415.6 L80.1 416.7 L80.5 416.3 L80.8 417.1 L81.2 416.0 L81.6 416.2 L81.9 415.6 L82.3 415.7 L82.6 417.8 L83.0 416.3 L83.3 419.5 L83.7 415.8 L84.1 417.0 L84.4 419.1 L84.8 417.9 L85.1 419.4 L85.5 417.8 L85.9 417.8 L86.2 417.5 L86.6 419.5 L86.9 415.4 L87.3 416.8 L87.7 416.6 L88.0 419.3 L88.4 417.7 L88.7 418.4 L89.1 417.5 L89.5 421.0 L89.8 417.8 L90.2 415.5 L90.5 416.9 L90.9 417.0 L91.3 417.3 L91.6 418.5 L92.0 418.2 L92.3 418.8 L92.7 420.0 L93.1 416.6 L93.4 418.0 L93.8 418.5 L94.1 415.7 L94.5 420.0 L94.9 415.6 L95.2 418.6 L95.6 418.5 L95.9 417.2 L96.3 419.5 L96.7 416.2 L97.0 414.8 L97.4 418.4 L97.7 416.7 L98.1 417.9 L98.5 417.1 L98.8 417.7 L99.2 417.9 L99.5 419.1 L99.9 418.2 L100.2 418.7 L100.6 416.2 L101.0 415.6 L101.3 417.4 L101.7 418.0 L102.0 415.5 L102.4 414.9 L102.8 417.7 L103.1 418.4 L103.5 417.4 L103.8 417.3 L104.2 420.7 L104.6 415.7 L104.9 417.4 L105.3 416.0 L105.6 418.6 L106.0 417.4 L106.4 417.9 L106.7 416.6 L107.1 418.1 L107.4 418.1 L107.8 417.5 L108.2 415.3 L108.5 417.3 L108.9 416.6 L109.2 416.9 L109.6 417.2 L110.0 417.2 L110.3 416.7 L110.7 417.0 L111.0 416.3 L111.4 413.4 L111.8 418.8 L112.1 416.4 L112.5 416.3 L112.8 418.9 L113.2 415.0 L113.6 418.6 L113.9 417.4 L114.3 415.3 L114.6 416.9 L115.0 415.1 L115.4 416.4 L115.7 414.6 L116.1 416.6 L116.4 413.8 L116.8 418.5 L117.2 414.8 L117.5 414.9 L117.9 418.0 L118.2 414.2 L118.6 415.2 L118.9 416.6 L119.3 416.6 L119.7 415.0 L120.0 419.7 L120.4 410.2 L120.7 414.5 L121.1 412.8 L121.5 414.7 L121.8 416.2 L122.2 416.2 L122.5 417.1 L122.9 417.9 L123.3 414.6 L123.6 415.1 L124.0 413.3 L124.3 412.9 L124.7 412.8 L125.1 417.6 L125.4 415.2 L125.8 415.0 L126.1 411.0 L126.5 412.3 L126.9 412.8 L127.2 415.5 L127.6 413.9 L127.9 412.1 L128.3 412.8 L128.7 414.1 L129.0 415.6 L129.4 414.4 L129.7 416.2 L130.1 411.4 L130.5 415.0 L130.8 415.0 L131.2 412.6 L131.5 415.0 L131.9 416.3 L132.3 413.1 L132.6 415.9 L133.0 414.0 L133.3 415.6 L133.7 414.3 L134.1 413.4 L134.4 414.8 L134.8 413.7 L135.1 416.5 L135.5 413.4 L135.9 416.9 L136.2 413.8 L136.6 415.3 L136.9 417.1 L137.3 413.7 L137.6 415.7 L138.0 416.2 L138.4 426.2 L138.7 414.4 L139.1 413.0 L139.4 421.7 L139.8 418.3 L140.2 417.5 L140.5 414.2 L140.9 417.4 L141.2 416.3 L141.6 417.0 L142.0 417.9 L142.3 418.1 L142.7 411.7 L143.0 416.0 L143.4 413.2 L143.8 418.6 L144.1 415.9 L144.5 416.6 L144.8 415.2 L145.2 416.3 L145.6 416.8 L145.9 416.5 L146.3 416.8 L146.6 415.3 L147.0 420.7 L147.4 414.7 L147.7 415.6 L148.1 417.1 L148.4 414.8 L148.8 419.3 L149.2 417.5 L149.5 416.3 L149.9 418.3 L150.2 413.9 L150.6 418.2 L151.0 417.4 L151.3 417.2 L151.7 415.6 L152.0 415.5 L152.4 415.2 L152.8 415.7 L153.1 418.2 L153.5 417.9 L153.8 415.4 L154.2 416.6 L154.6 416.4 L154.9 416.5 L155.3 414.4 L155.6 416.6 L156.0 416.4 L156.3 422.3 L156.7 417.0 L157.1 415.8 L157.4 417.3 L157.8 416.1 L158.1 416.0 L158.5 415.4 L158.9 418.5 L159.2 417.9 L159.6 418.8 L159.9 417.3 L160.3 428.0 L160.7 413.1 L161.0 400.2 L161.4 416.2 L161.7 417.9 L162.1 411.0 L162.5 417.0 L162.8 419.2 L163.2 418.2 L163.5 417.3 L163.9 422.0 L163.9 442 L17.9 442 Z" fill="url(#g33)" stroke="none"/><path d="M17.9 419.6 L18.3 420.0 L18.6 419.6 L19.0 419.3 L19.3 419.8 L19.7 419.6 L20.1 419.6 L20.4 420.1 L20.8 420.0 L21.1 421.3 L21.5 419.4 L21.9 419.5 L22.2 420.8 L22.6 419.4 L22.9 421.7 L23.3 420.6 L23.7 421.7 L24.0 419.4 L24.4 420.0 L24.7 420.4 L25.1 419.7 L25.5 421.1 L25.8 421.1 L26.2 420.1 L26.5 420.4 L26.9 420.1 L27.2 420.2 L27.6 419.9 L28.0 419.3 L28.3 419.1 L28.7 418.6 L29.0 419.1 L29.4 419.0 L29.8 419.8 L30.1 419.7 L30.5 419.5 L30.8 419.0 L31.2 420.6 L31.6 417.6 L31.9 419.4 L32.3 418.5 L32.6 418.6 L33.0 418.7 L33.4 419.1 L33.7 419.0 L34.1 419.0 L34.4 418.8 L34.8 419.2 L35.2 418.5 L35.5 418.5 L35.9 419.9 L36.2 418.5 L36.6 419.8 L37.0 418.1 L37.3 417.4 L37.7 418.4 L38.0 418.5 L38.4 418.7 L38.8 418.0 L39.1 418.1 L39.5 419.5 L39.8 418.8 L40.2 420.2 L40.6 418.2 L40.9 417.0 L41.3 418.9 L41.6 418.3 L42.0 418.2 L42.4 418.2 L42.7 418.4 L43.1 418.0 L43.4 416.9 L43.8 418.2 L44.2 418.0 L44.5 417.2 L44.9 417.7 L45.2 417.6 L45.6 418.8 L45.9 419.0 L46.3 418.6 L46.7 417.6 L47.0 418.3 L47.4 416.4 L47.7 418.9 L48.1 418.9 L48.5 418.5 L48.8 416.2 L49.2 420.1 L49.5 417.2 L49.9 418.6 L50.3 413.3 L50.6 418.1 L51.0 420.3 L51.3 420.1 L51.7 415.5 L52.1 419.8 L52.4 423.3 L52.8 416.4 L53.1 418.2 L53.5 417.4 L53.9 418.6 L54.2 420.2 L54.6 417.3 L54.9 419.7 L55.3 417.9 L55.7 419.6 L56.0 415.3 L56.4 418.1 L56.7 418.7 L57.1 418.4 L57.5 416.6 L57.8 418.6 L58.2 417.7 L58.5 417.1 L58.9 419.9 L59.3 414.3 L59.6 420.3 L60.0 414.9 L60.3 416.4 L60.7 418.7 L61.1 416.1 L61.4 417.6 L61.8 416.6 L62.1 417.3 L62.5 417.7 L62.9 418.5 L63.2 416.8 L63.6 419.7 L63.9 417.8 L64.3 416.8 L64.6 417.6 L65.0 419.2 L65.4 416.8 L65.7 418.1 L66.1 416.6 L66.4 417.3 L66.8 415.9 L67.2 416.0 L67.5 416.3 L67.9 418.3 L68.2 417.8 L68.6 417.2 L69.0 416.6 L69.3 418.1 L69.7 416.4 L70.0 417.4 L70.4 417.7 L70.8 417.6 L71.1 417.1 L71.5 415.8 L71.8 416.5 L72.2 418.0 L72.6 417.4 L72.9 416.9 L73.3 416.8 L73.6 418.2 L74.0 416.6 L74.4 416.3 L74.7 415.9 L75.1 417.1 L75.4 412.4 L75.8 416.7 L76.2 416.8 L76.5 416.8 L76.9 418.0 L77.2 420.9 L77.6 416.9 L78.0 416.9 L78.3 418.5 L78.7 417.2 L79.0 418.1 L79.4 416.9 L79.8 415.6 L80.1 416.7 L80.5 416.3 L80.8 417.1 L81.2 416.0 L81.6 416.2 L81.9 415.6 L82.3 415.7 L82.6 417.8 L83.0 416.3 L83.3 419.5 L83.7 415.8 L84.1 417.0 L84.4 419.1 L84.8 417.9 L85.1 419.4 L85.5 417.8 L85.9 417.8 L86.2 417.5 L86.6 419.5 L86.9 415.4 L87.3 416.8 L87.7 416.6 L88.0 419.3 L88.4 417.7 L88.7 418.4 L89.1 417.5 L89.5 421.0 L89.8 417.8 L90.2 415.5 L90.5 416.9 L90.9 417.0 L91.3 417.3 L91.6 418.5 L92.0 418.2 L92.3 418.8 L92.7 420.0 L93.1 416.6 L93.4 418.0 L93.8 418.5 L94.1 415.7 L94.5 420.0 L94.9 415.6 L95.2 418.6 L95.6 418.5 L95.9 417.2 L96.3 419.5 L96.7 416.2 L97.0 414.8 L97.4 418.4 L97.7 416.7 L98.1 417.9 L98.5 417.1 L98.8 417.7 L99.2 417.9 L99.5 419.1 L99.9 418.2 L100.2 418.7 L100.6 416.2 L101.0 415.6 L101.3 417.4 L101.7 418.0 L102.0 415.5 L102.4 414.9 L102.8 417.7 L103.1 418.4 L103.5 417.4 L103.8 417.3 L104.2 420.7 L104.6 415.7 L104.9 417.4 L105.3 416.0 L105.6 418.6 L106.0 417.4 L106.4 417.9 L106.7 416.6 L107.1 418.1 L107.4 418.1 L107.8 417.5 L108.2 415.3 L108.5 417.3 L108.9 416.6 L109.2 416.9 L109.6 417.2 L110.0 417.2 L110.3 416.7 L110.7 417.0 L111.0 416.3 L111.4 413.4 L111.8 418.8 L112.1 416.4 L112.5 416.3 L112.8 418.9 L113.2 415.0 L113.6 418.6 L113.9 417.4 L114.3 415.3 L114.6 416.9 L115.0 415.1 L115.4 416.4 L115.7 414.6 L116.1 416.6 L116.4 413.8 L116.8 418.5 L117.2 414.8 L117.5 414.9 L117.9 418.0 L118.2 414.2 L118.6 415.2 L118.9 416.6 L119.3 416.6 L119.7 415.0 L120.0 419.7 L120.4 410.2 L120.7 414.5 L121.1 412.8 L121.5 414.7 L121.8 416.2 L122.2 416.2 L122.5 417.1 L122.9 417.9 L123.3 414.6 L123.6 415.1 L124.0 413.3 L124.3 412.9 L124.7 412.8 L125.1 417.6 L125.4 415.2 L125.8 415.0 L126.1 411.0 L126.5 412.3 L126.9 412.8 L127.2 415.5 L127.6 413.9 L127.9 412.1 L128.3 412.8 L128.7 414.1 L129.0 415.6 L129.4 414.4 L129.7 416.2 L130.1 411.4 L130.5 415.0 L130.8 415.0 L131.2 412.6 L131.5 415.0 L131.9 416.3 L132.3 413.1 L132.6 415.9 L133.0 414.0 L133.3 415.6 L133.7 414.3 L134.1 413.4 L134.4 414.8 L134.8 413.7 L135.1 416.5 L135.5 413.4 L135.9 416.9 L136.2 413.8 L136.6 415.3 L136.9 417.1 L137.3 413.7 L137.6 415.7 L138.0 416.2 L138.4 426.2 L138.7 414.4 L139.1 413.0 L139.4 421.7 L139.8 418.3 L140.2 417.5 L140.5 414.2 L140.9 417.4 L141.2 416.3 L141.6 417.0 L142.0 417.9 L142.3 418.1 L142.7 411.7 L143.0 416.0 L143.4 413.2 L143.8 418.6 L144.1 415.9 L144.5 416.6 L144.8 415.2 L145.2 416.3 L145.6 416.8 L145.9 416.5 L146.3 416.8 L146.6 415.3 L147.0 420.7 L147.4 414.7 L147.7 415.6 L148.1 417.1 L148.4 414.8 L148.8 419.3 L149.2 417.5 L149.5 416.3 L149.9 418.3 L150.2 413.9 L150.6 418.2 L151.0 417.4 L151.3 417.2 L151.7 415.6 L152.0 415.5 L152.4 415.2 L152.8 415.7 L153.1 418.2 L153.5 417.9 L153.8 415.4 L154.2 416.6 L154.6 416.4 L154.9 416.5 L155.3 414.4 L155.6 416.6 L156.0 416.4 L156.3 422.3 L156.7 417.0 L157.1 415.8 L157.4 417.3 L157.8 416.1 L158.1 416.0 L158.5 415.4 L158.9 418.5 L159.2 417.9 L159.6 418.8 L159.9 417.3 L160.3 428.0 L160.7 413.1 L161.0 400.2 L161.4 416.2 L161.7 417.9 L162.1 411.0 L162.5 417.0 L162.8 419.2 L163.2 418.2 L163.5 417.3 L163.9 422.0" fill="none" stroke="#e8652e" stroke-width="0.8" stroke-linejoin="round"/>
<defs><linearGradient id="g44" gradientUnits="userSpaceOnUse" x1="0" y1="411.7" x2="0" y2="435.7"><stop offset="0" stop-color="#3aa4b1" stop-opacity=".11"/><stop offset="1" stop-color="#3aa4b1" stop-opacity="0"/></linearGradient></defs><path d="M177.9 418.4 L178.3 420.0 L178.6 419.5 L179.0 419.9 L179.3 420.0 L179.7 420.4 L180.1 418.8 L180.4 420.1 L180.8 421.0 L181.1 421.1 L181.5 419.8 L181.9 419.8 L182.2 415.9 L182.6 417.8 L182.9 417.5 L183.3 419.8 L183.6 419.5 L184.0 419.8 L184.4 419.3 L184.7 419.6 L185.1 419.1 L185.4 418.9 L185.8 418.6 L186.2 418.9 L186.5 419.9 L186.9 418.2 L187.2 419.7 L187.6 419.3 L188.0 421.1 L188.3 419.7 L188.7 420.4 L189.0 419.5 L189.4 418.7 L189.8 422.6 L190.1 419.4 L190.5 419.9 L190.8 420.2 L191.2 420.8 L191.6 419.3 L191.9 422.2 L192.3 419.5 L192.6 421.0 L193.0 420.6 L193.4 418.3 L193.7 419.7 L194.1 420.0 L194.4 418.8 L194.8 419.1 L195.1 419.4 L195.5 420.6 L195.9 420.3 L196.2 420.0 L196.6 420.6 L196.9 420.2 L197.3 421.4 L197.7 420.7 L198.0 418.2 L198.4 419.4 L198.7 419.5 L199.1 419.7 L199.5 421.1 L199.8 421.4 L200.2 418.9 L200.5 419.2 L200.9 416.5 L201.3 419.9 L201.6 421.0 L202.0 419.3 L202.3 421.2 L202.7 419.5 L203.1 420.1 L203.4 422.5 L203.8 419.5 L204.1 421.9 L204.5 420.0 L204.9 420.0 L205.2 418.7 L205.6 419.9 L205.9 420.9 L206.3 419.3 L206.6 419.4 L207.0 420.9 L207.4 420.0 L207.7 419.7 L208.1 420.3 L208.4 420.0 L208.8 420.4 L209.2 419.7 L209.5 421.1 L209.9 419.0 L210.2 420.4 L210.6 420.5 L211.0 419.7 L211.3 419.6 L211.7 420.7 L212.0 419.4 L212.4 420.7 L212.8 419.4 L213.1 420.2 L213.5 419.4 L213.8 418.9 L214.2 420.4 L214.6 420.3 L214.9 420.9 L215.3 421.8 L215.6 419.8 L216.0 419.9 L216.4 420.6 L216.7 419.5 L217.1 421.2 L217.4 420.0 L217.8 420.1 L218.1 419.4 L218.5 419.0 L218.9 420.6 L219.2 420.0 L219.6 420.4 L219.9 420.1 L220.3 420.1 L220.7 421.8 L221.0 420.7 L221.4 420.1 L221.7 418.8 L222.1 419.7 L222.5 419.9 L222.8 420.7 L223.2 420.5 L223.5 420.3 L223.9 420.0 L224.3 420.0 L224.6 419.6 L225.0 423.3 L225.3 419.0 L225.7 421.5 L226.1 422.3 L226.4 417.9 L226.8 417.9 L227.1 419.0 L227.5 418.8 L227.9 419.1 L228.2 419.0 L228.6 418.8 L228.9 417.5 L229.3 417.5 L229.6 418.0 L230.0 417.5 L230.4 415.6 L230.7 418.2 L231.1 417.0 L231.4 418.4 L231.8 417.6 L232.2 417.7 L232.5 416.4 L232.9 415.9 L233.2 417.3 L233.6 418.5 L234.0 415.8 L234.3 416.1 L234.7 418.6 L235.0 417.2 L235.4 417.9 L235.8 415.4 L236.1 417.7 L236.5 417.0 L236.8 418.2 L237.2 417.1 L237.6 418.9 L237.9 419.4 L238.3 417.6 L238.6 418.3 L239.0 419.2 L239.4 419.1 L239.7 419.1 L240.1 419.5 L240.4 418.4 L240.8 418.3 L241.1 419.8 L241.5 419.5 L241.9 418.6 L242.2 420.5 L242.6 419.0 L242.9 420.0 L243.3 419.2 L243.7 419.2 L244.0 419.5 L244.4 419.7 L244.7 418.9 L245.1 419.8 L245.5 418.5 L245.8 420.0 L246.2 419.2 L246.5 420.1 L246.9 419.6 L247.3 419.0 L247.6 419.6 L248.0 420.2 L248.3 419.5 L248.7 419.7 L249.1 419.1 L249.4 418.9 L249.8 420.2 L250.1 420.2 L250.5 419.7 L250.9 420.3 L251.2 421.0 L251.6 420.5 L251.9 419.9 L252.3 420.1 L252.6 420.8 L253.0 419.8 L253.4 420.1 L253.7 421.5 L254.1 419.6 L254.4 420.6 L254.8 420.2 L255.2 420.4 L255.5 420.4 L255.9 420.1 L256.2 420.5 L256.6 419.7 L257.0 419.5 L257.3 420.4 L257.7 420.5 L258.0 420.6 L258.4 420.2 L258.8 420.3 L259.1 420.0 L259.5 419.8 L259.8 420.6 L260.2 419.3 L260.6 420.6 L260.9 419.7 L261.3 420.5 L261.6 419.9 L262.0 420.4 L262.3 420.5 L262.7 420.5 L263.1 420.4 L263.4 420.8 L263.8 420.8 L264.1 420.3 L264.5 420.7 L264.9 420.2 L265.2 420.3 L265.6 420.3 L265.9 421.2 L266.3 420.5 L266.7 420.5 L267.0 420.5 L267.4 420.4 L267.7 421.6 L268.1 420.5 L268.5 420.2 L268.8 419.8 L269.2 420.6 L269.5 420.8 L269.9 420.3 L270.3 420.0 L270.6 420.2 L271.0 420.0 L271.3 420.6 L271.7 420.4 L272.1 420.3 L272.4 419.9 L272.8 420.7 L273.1 420.0 L273.5 420.5 L273.8 419.6 L274.2 420.6 L274.6 420.0 L274.9 420.0 L275.3 420.5 L275.6 420.2 L276.0 419.8 L276.4 420.1 L276.7 420.3 L277.1 420.6 L277.4 420.6 L277.8 421.4 L278.2 420.1 L278.5 420.7 L278.9 420.0 L279.2 420.3 L279.6 419.6 L280.0 420.4 L280.3 420.3 L280.7 420.4 L281.0 420.1 L281.4 420.1 L281.8 420.3 L282.1 420.4 L282.5 419.6 L282.8 419.8 L283.2 420.7 L283.6 420.5 L283.9 420.5 L284.3 420.3 L284.6 420.1 L285.0 420.6 L285.3 420.2 L285.7 420.4 L286.1 421.2 L286.4 421.0 L286.8 420.3 L287.1 420.2 L287.5 419.6 L287.9 420.4 L288.2 420.0 L288.6 419.7 L288.9 419.1 L289.3 421.6 L289.7 421.4 L290.0 419.7 L290.4 420.9 L290.7 420.1 L291.1 420.0 L291.5 420.1 L291.8 420.1 L292.2 420.4 L292.5 420.7 L292.9 419.3 L293.3 419.5 L293.6 419.2 L294.0 419.5 L294.3 421.0 L294.7 421.5 L295.1 419.5 L295.4 418.7 L295.8 419.5 L296.1 420.7 L296.5 419.7 L296.8 420.9 L297.2 420.9 L297.6 418.7 L297.9 415.5 L298.3 419.8 L298.6 424.1 L299.0 419.9 L299.4 417.9 L299.7 420.1 L300.1 419.5 L300.4 420.8 L300.8 419.5 L301.2 420.3 L301.5 419.1 L301.9 419.8 L302.2 419.3 L302.6 419.5 L303.0 419.4 L303.3 419.2 L303.7 419.5 L304.0 419.8 L304.4 420.1 L304.8 419.9 L305.1 419.5 L305.5 418.2 L305.8 421.0 L306.2 419.4 L306.6 420.2 L306.9 418.6 L307.3 420.2 L307.6 420.2 L308.0 420.4 L308.3 419.7 L308.7 420.5 L309.1 419.6 L309.4 419.1 L309.8 419.4 L310.1 419.6 L310.5 419.7 L310.9 422.0 L311.2 418.6 L311.6 418.9 L311.9 420.6 L312.3 419.7 L312.7 419.3 L313.0 420.3 L313.4 419.5 L313.7 419.5 L314.1 413.0 L314.5 419.2 L314.8 419.7 L315.2 419.5 L315.5 419.0 L315.9 419.5 L316.3 419.4 L316.6 419.6 L317.0 419.7 L317.3 419.0 L317.7 419.5 L318.1 418.2 L318.4 418.3 L318.8 419.3 L319.1 418.3 L319.5 419.1 L319.8 418.7 L320.2 419.8 L320.6 419.6 L320.9 402.2 L321.3 419.1 L321.6 425.4 L322.0 419.4 L322.4 419.5 L322.7 419.0 L323.1 402.6 L323.4 418.8 L323.8 421.0 L323.8 442 L177.9 442 Z" fill="url(#g44)" stroke="none"/><path d="M177.9 418.4 L178.3 420.0 L178.6 419.5 L179.0 419.9 L179.3 420.0 L179.7 420.4 L180.1 418.8 L180.4 420.1 L180.8 421.0 L181.1 421.1 L181.5 419.8 L181.9 419.8 L182.2 415.9 L182.6 417.8 L182.9 417.5 L183.3 419.8 L183.6 419.5 L184.0 419.8 L184.4 419.3 L184.7 419.6 L185.1 419.1 L185.4 418.9 L185.8 418.6 L186.2 418.9 L186.5 419.9 L186.9 418.2 L187.2 419.7 L187.6 419.3 L188.0 421.1 L188.3 419.7 L188.7 420.4 L189.0 419.5 L189.4 418.7 L189.8 422.6 L190.1 419.4 L190.5 419.9 L190.8 420.2 L191.2 420.8 L191.6 419.3 L191.9 422.2 L192.3 419.5 L192.6 421.0 L193.0 420.6 L193.4 418.3 L193.7 419.7 L194.1 420.0 L194.4 418.8 L194.8 419.1 L195.1 419.4 L195.5 420.6 L195.9 420.3 L196.2 420.0 L196.6 420.6 L196.9 420.2 L197.3 421.4 L197.7 420.7 L198.0 418.2 L198.4 419.4 L198.7 419.5 L199.1 419.7 L199.5 421.1 L199.8 421.4 L200.2 418.9 L200.5 419.2 L200.9 416.5 L201.3 419.9 L201.6 421.0 L202.0 419.3 L202.3 421.2 L202.7 419.5 L203.1 420.1 L203.4 422.5 L203.8 419.5 L204.1 421.9 L204.5 420.0 L204.9 420.0 L205.2 418.7 L205.6 419.9 L205.9 420.9 L206.3 419.3 L206.6 419.4 L207.0 420.9 L207.4 420.0 L207.7 419.7 L208.1 420.3 L208.4 420.0 L208.8 420.4 L209.2 419.7 L209.5 421.1 L209.9 419.0 L210.2 420.4 L210.6 420.5 L211.0 419.7 L211.3 419.6 L211.7 420.7 L212.0 419.4 L212.4 420.7 L212.8 419.4 L213.1 420.2 L213.5 419.4 L213.8 418.9 L214.2 420.4 L214.6 420.3 L214.9 420.9 L215.3 421.8 L215.6 419.8 L216.0 419.9 L216.4 420.6 L216.7 419.5 L217.1 421.2 L217.4 420.0 L217.8 420.1 L218.1 419.4 L218.5 419.0 L218.9 420.6 L219.2 420.0 L219.6 420.4 L219.9 420.1 L220.3 420.1 L220.7 421.8 L221.0 420.7 L221.4 420.1 L221.7 418.8 L222.1 419.7 L222.5 419.9 L222.8 420.7 L223.2 420.5 L223.5 420.3 L223.9 420.0 L224.3 420.0 L224.6 419.6 L225.0 423.3 L225.3 419.0 L225.7 421.5 L226.1 422.3 L226.4 417.9 L226.8 417.9 L227.1 419.0 L227.5 418.8 L227.9 419.1 L228.2 419.0 L228.6 418.8 L228.9 417.5 L229.3 417.5 L229.6 418.0 L230.0 417.5 L230.4 415.6 L230.7 418.2 L231.1 417.0 L231.4 418.4 L231.8 417.6 L232.2 417.7 L232.5 416.4 L232.9 415.9 L233.2 417.3 L233.6 418.5 L234.0 415.8 L234.3 416.1 L234.7 418.6 L235.0 417.2 L235.4 417.9 L235.8 415.4 L236.1 417.7 L236.5 417.0 L236.8 418.2 L237.2 417.1 L237.6 418.9 L237.9 419.4 L238.3 417.6 L238.6 418.3 L239.0 419.2 L239.4 419.1 L239.7 419.1 L240.1 419.5 L240.4 418.4 L240.8 418.3 L241.1 419.8 L241.5 419.5 L241.9 418.6 L242.2 420.5 L242.6 419.0 L242.9 420.0 L243.3 419.2 L243.7 419.2 L244.0 419.5 L244.4 419.7 L244.7 418.9 L245.1 419.8 L245.5 418.5 L245.8 420.0 L246.2 419.2 L246.5 420.1 L246.9 419.6 L247.3 419.0 L247.6 419.6 L248.0 420.2 L248.3 419.5 L248.7 419.7 L249.1 419.1 L249.4 418.9 L249.8 420.2 L250.1 420.2 L250.5 419.7 L250.9 420.3 L251.2 421.0 L251.6 420.5 L251.9 419.9 L252.3 420.1 L252.6 420.8 L253.0 419.8 L253.4 420.1 L253.7 421.5 L254.1 419.6 L254.4 420.6 L254.8 420.2 L255.2 420.4 L255.5 420.4 L255.9 420.1 L256.2 420.5 L256.6 419.7 L257.0 419.5 L257.3 420.4 L257.7 420.5 L258.0 420.6 L258.4 420.2 L258.8 420.3 L259.1 420.0 L259.5 419.8 L259.8 420.6 L260.2 419.3 L260.6 420.6 L260.9 419.7 L261.3 420.5 L261.6 419.9 L262.0 420.4 L262.3 420.5 L262.7 420.5 L263.1 420.4 L263.4 420.8 L263.8 420.8 L264.1 420.3 L264.5 420.7 L264.9 420.2 L265.2 420.3 L265.6 420.3 L265.9 421.2 L266.3 420.5 L266.7 420.5 L267.0 420.5 L267.4 420.4 L267.7 421.6 L268.1 420.5 L268.5 420.2 L268.8 419.8 L269.2 420.6 L269.5 420.8 L269.9 420.3 L270.3 420.0 L270.6 420.2 L271.0 420.0 L271.3 420.6 L271.7 420.4 L272.1 420.3 L272.4 419.9 L272.8 420.7 L273.1 420.0 L273.5 420.5 L273.8 419.6 L274.2 420.6 L274.6 420.0 L274.9 420.0 L275.3 420.5 L275.6 420.2 L276.0 419.8 L276.4 420.1 L276.7 420.3 L277.1 420.6 L277.4 420.6 L277.8 421.4 L278.2 420.1 L278.5 420.7 L278.9 420.0 L279.2 420.3 L279.6 419.6 L280.0 420.4 L280.3 420.3 L280.7 420.4 L281.0 420.1 L281.4 420.1 L281.8 420.3 L282.1 420.4 L282.5 419.6 L282.8 419.8 L283.2 420.7 L283.6 420.5 L283.9 420.5 L284.3 420.3 L284.6 420.1 L285.0 420.6 L285.3 420.2 L285.7 420.4 L286.1 421.2 L286.4 421.0 L286.8 420.3 L287.1 420.2 L287.5 419.6 L287.9 420.4 L288.2 420.0 L288.6 419.7 L288.9 419.1 L289.3 421.6 L289.7 421.4 L290.0 419.7 L290.4 420.9 L290.7 420.1 L291.1 420.0 L291.5 420.1 L291.8 420.1 L292.2 420.4 L292.5 420.7 L292.9 419.3 L293.3 419.5 L293.6 419.2 L294.0 419.5 L294.3 421.0 L294.7 421.5 L295.1 419.5 L295.4 418.7 L295.8 419.5 L296.1 420.7 L296.5 419.7 L296.8 420.9 L297.2 420.9 L297.6 418.7 L297.9 415.5 L298.3 419.8 L298.6 424.1 L299.0 419.9 L299.4 417.9 L299.7 420.1 L300.1 419.5 L300.4 420.8 L300.8 419.5 L301.2 420.3 L301.5 419.1 L301.9 419.8 L302.2 419.3 L302.6 419.5 L303.0 419.4 L303.3 419.2 L303.7 419.5 L304.0 419.8 L304.4 420.1 L304.8 419.9 L305.1 419.5 L305.5 418.2 L305.8 421.0 L306.2 419.4 L306.6 420.2 L306.9 418.6 L307.3 420.2 L307.6 420.2 L308.0 420.4 L308.3 419.7 L308.7 420.5 L309.1 419.6 L309.4 419.1 L309.8 419.4 L310.1 419.6 L310.5 419.7 L310.9 422.0 L311.2 418.6 L311.6 418.9 L311.9 420.6 L312.3 419.7 L312.7 419.3 L313.0 420.3 L313.4 419.5 L313.7 419.5 L314.1 413.0 L314.5 419.2 L314.8 419.7 L315.2 419.5 L315.5 419.0 L315.9 419.5 L316.3 419.4 L316.6 419.6 L317.0 419.7 L317.3 419.0 L317.7 419.5 L318.1 418.2 L318.4 418.3 L318.8 419.3 L319.1 418.3 L319.5 419.1 L319.8 418.7 L320.2 419.8 L320.6 419.6 L320.9 402.2 L321.3 419.1 L321.6 425.4 L322.0 419.4 L322.4 419.5 L322.7 419.0 L323.1 402.6 L323.4 418.8 L323.8 421.0" fill="none" stroke="#3aa4b1" stroke-width="0.8" stroke-linejoin="round"/>
</svg>
<div class="b" style="left:334.3px;top:201.6px;width:469.90000000000003px;height:254.4px;box-shadow:0 0 2.5px rgba(60,68,82,.36);border-radius:5px;background:#fff;"></div>
<div class="b" style="left:343.8px;top:446px;width:2.1999999999999886px;height:1px;background:#c9c9c9;"></div>
<div class="b" style="left:372.3px;top:446px;width:5.5px;height:1px;background:#c9c9c9;"></div>
<div class="b" style="left:383.6px;top:446px;width:1.6000000000000227px;height:1px;background:#c9c9c9;"></div>
<div class="b" style="left:389.6px;top:446px;width:1.6000000000000227px;height:1px;background:#c9c9c9;"></div>
<div class="b" style="left:557px;top:446px;width:2px;height:1px;background:#c9c9c9;"></div>
<div class="b" style="left:561px;top:446px;width:2px;height:1px;background:#c9c9c9;"></div>
<div class="b" style="left:565px;top:446px;width:1.6000000000000227px;height:1px;background:#c9c9c9;"></div>
<div class="b" style="left:676px;top:446px;width:2px;height:1px;background:#c9c9c9;"></div>
<div class="b" style="left:787px;top:446px;width:2px;height:1px;background:#c9c9c9;"></div>
<div class="b" style="left:791px;top:446px;width:2px;height:1px;background:#c9c9c9;"></div>
<div class="b" style="left:795px;top:446px;width:1.6000000000000227px;height:1px;background:#c9c9c9;"></div>
<svg class="b" style="left:0;top:0" width="820" height="609" viewBox="0 0 820 609"><rect x="338.3" y="238.3" width="462.5" height="16.35" fill="#2e88e2"/><rect x="338.3" y="273.45" width="462.5" height="18.8" fill="#f6f6f6"/><rect x="338.3" y="311.05" width="462.5" height="18.8" fill="#f6f6f6"/><rect x="338.3" y="348.65" width="462.5" height="18.8" fill="#f6f6f6"/><rect x="338.3" y="386.25" width="462.5" height="18.8" fill="#f6f6f6"/><rect x="338.3" y="423.85" width="462.5" height="18.8" fill="#f6f6f6"/></svg>
<div class="b" style="left:14.8px;top:467.3px;width:389.59999999999997px;height:152.7px;box-shadow:0 0 2.5px rgba(60,68,82,.36);border-radius:5px;background:#fff;"></div>
<div class="b" style="left:415px;top:467.3px;width:389.20000000000005px;height:152.7px;box-shadow:0 0 2.5px rgba(60,68,82,.36);border-radius:5px;background:#fff;"></div>
<svg class="b" style="left:0;top:0" width="820" height="609" viewBox="0 0 820 609" shape-rendering="auto">
<rect x="44.3" y="515.70" width="343.3" height="1" fill="#ececec"/>
<rect x="44.3" y="532.45" width="343.3" height="1" fill="#ececec"/>
<rect x="44.3" y="549.20" width="343.3" height="1" fill="#ececec"/>
<rect x="44.3" y="565.95" width="343.3" height="1" fill="#ececec"/>
<rect x="44.3" y="582.70" width="343.3" height="1" fill="#ececec"/>
<rect x="44.3" y="599.45" width="343.3" height="1" fill="#ececec"/>
<rect x="44.3" y="616.20" width="343.3" height="1" fill="#ececec"/>
<rect x="444.4" y="515.90" width="343.4" height="1" fill="#ececec"/>
<rect x="444.4" y="529.20" width="343.4" height="1" fill="#ececec"/>
<rect x="444.4" y="542.50" width="343.4" height="1" fill="#ececec"/>
<rect x="444.4" y="555.80" width="343.4" height="1" fill="#ececec"/>
<rect x="444.4" y="569.10" width="343.4" height="1" fill="#ececec"/>
<rect x="444.4" y="582.40" width="343.4" height="1" fill="#ececec"/>
<rect x="444.4" y="595.70" width="343.4" height="1" fill="#ececec"/>
<rect x="444.4" y="609.00" width="343.4" height="1" fill="#ececec"/>
<rect x="53.7" y="587.8" width="23.3" height="24.2" fill="#ec4bb6"/>
<rect x="87.1" y="562" width="23.3" height="50.0" fill="#ec4bb6"/>
<rect x="120.5" y="551.4" width="23.3" height="60.6" fill="#ec4bb6"/>
<rect x="153.9" y="548.2" width="23.3" height="63.8" fill="#ec4bb6"/>
<rect x="187.3" y="564.3" width="23.3" height="47.7" fill="#ec4bb6"/>
<rect x="220.7" y="565" width="23.3" height="47.0" fill="#ec4bb6"/>
<rect x="254.1" y="559.1" width="23.3" height="52.9" fill="#ec4bb6"/>
<rect x="287.5" y="601.2" width="23.3" height="10.8" fill="#ec4bb6"/>
<rect x="320.9" y="601.2" width="23.3" height="10.8" fill="#ec4bb6"/>
<rect x="354.3" y="580.2" width="23.3" height="31.8" fill="#ec4bb6"/>
<rect x="453.5" y="548.9" width="23.4" height="63.1" fill="#f4a991"/>
<rect x="486.9" y="560" width="23.4" height="52.0" fill="#f4a991"/>
<rect x="520.3" y="540.8" width="23.4" height="71.2" fill="#f4a991"/>
<rect x="553.7" y="535.4" width="23.4" height="76.6" fill="#f4a991"/>
<rect x="587.1" y="546.3" width="23.4" height="65.7" fill="#f4a991"/>
<rect x="620.5" y="560.8" width="23.4" height="51.2" fill="#f4a991"/>
<rect x="653.9" y="561.1" width="23.4" height="50.9" fill="#f4a991"/>
<rect x="687.3" y="587.5" width="23.4" height="24.5" fill="#f4a991"/>
<rect x="720.7" y="603.5" width="23.4" height="8.5" fill="#f4a991"/>
<rect x="754.1" y="573.2" width="23.4" height="38.8" fill="#f4a991"/>
<rect x="311.3" y="499.7" width="19.6" height="8.9" rx="1" fill="#ec4bb6"/>
<rect x="690.1" y="499.7" width="19.2" height="8.9" rx="1" fill="#f4a991"/>
</svg>
<svg class="b" style="left:0;top:0" width="820" height="609" viewBox="0 0 820 609" font-family="'Liberation Sans', sans-serif"><text x="90.00" y="54.30" font-size="21.5" fill="#222" textLength="279.00" lengthAdjust="spacingAndGlyphs">Google Ads Monitoring Report</text>
<text x="589.70" y="52.60" font-size="12" fill="#5b5fc7" text-anchor="middle" font-weight="700" textLength="89.30" lengthAdjust="spacingAndGlyphs">More Dashboard</text>
<text x="727.80" y="52.60" font-size="12" fill="#ecebfb" text-anchor="middle" font-weight="700" textLength="91.50" lengthAdjust="spacingAndGlyphs">Setup Dashboard</text>
<text x="53.70" y="116.10" font-size="11.3" fill="#777" textLength="30.60" lengthAdjust="spacingAndGlyphs">Filters</text>
<text x="139.50" y="116.30" font-size="12.65" fill="#000" textLength="38.40" lengthAdjust="spacingAndGlyphs">Device</text>
<text x="341.80" y="116.30" font-size="12.65" fill="#333">Region</text>
<text x="550.50" y="116.30" font-size="12.65" fill="#111">Jan 1, 2025 - Feb 11, 2026</text>
<text x="56.20" y="169.90" font-size="16.9" fill="#222" textLength="163.30" lengthAdjust="spacingAndGlyphs">Ads Monitoring Report</text>
<text x="24.60" y="219.00" font-size="12" fill="#1f1f1f" textLength="76.40" lengthAdjust="spacingAndGlyphs">Amount spent</text>
<text x="184.20" y="221.30" font-size="12" fill="#1f1f1f">Impressions</text>
<text x="24.60" y="349.00" font-size="12" fill="#1f1f1f" textLength="21.00" lengthAdjust="spacingAndGlyphs">CPC</text>
<text x="184.00" y="350.80" font-size="12" fill="#1f1f1f" textLength="19.90" lengthAdjust="spacingAndGlyphs">CTR</text>
<text x="32.90" y="246.00" font-size="17.6" fill="#4e4e4e" textLength="90.30" lengthAdjust="spacingAndGlyphs">443,019.24</text>
<text x="186.00" y="249.90" font-size="20" fill="#505054" textLength="87.40" lengthAdjust="spacingAndGlyphs">5,541,787</text>
<text x="26.40" y="377.90" font-size="20" fill="#505054" textLength="38.10" lengthAdjust="spacingAndGlyphs">3.54</text>
<text x="191.60" y="378.00" font-size="18" fill="#4e4e4e" textLength="34.40" lengthAdjust="spacingAndGlyphs">0.02</text>
<text x="341.80" y="229.00" font-size="12" fill="#222" textLength="113.40" lengthAdjust="spacingAndGlyphs">Campaigns Overview</text>
<text x="342.00" y="250.20" font-size="12.1" fill="#fff" font-weight="700" textLength="89.70" lengthAdjust="spacingAndGlyphs">Campaign name</text>
<text x="552.30" y="250.20" font-size="12.1" fill="#fff" text-anchor="end" font-weight="700" textLength="33.40" lengthAdjust="spacingAndGlyphs">Clicks</text>
<path d="M557.8 245H562.4L560.1 248.2Z" fill="#fff" stroke="#fff" stroke-width=".3" stroke-linejoin="round"/>
<text x="682.00" y="250.20" font-size="12.1" fill="#fff" text-anchor="end" font-weight="700" textLength="70.20" lengthAdjust="spacingAndGlyphs">Conversions</text>
<text x="797.20" y="250.20" font-size="12.1" fill="#fff" text-anchor="end" font-weight="700" textLength="22.90" lengthAdjust="spacingAndGlyphs">CTR</text>
<text x="341.80" y="267.60" font-size="10.8" fill="#474747" textLength="82.30" lengthAdjust="spacingAndGlyphs">GDN - İş Ortaklığı</text>
<text x="566.60" y="267.60" font-size="10.8" fill="#474747" text-anchor="end" textLength="32.54" lengthAdjust="spacingAndGlyphs">50,545</text>
<text x="682.00" y="267.60" font-size="10.8" fill="#474747" text-anchor="end" textLength="41.41" lengthAdjust="spacingAndGlyphs">6,708.48</text>
<text x="797.20" y="267.60" font-size="10.8" fill="#474747" text-anchor="end" textLength="20.49" lengthAdjust="spacingAndGlyphs">0.02</text>
<text x="341.80" y="286.40" font-size="10.8" fill="#474747" textLength="104.20" lengthAdjust="spacingAndGlyphs">Arama Ağı - Sağlık Si...</text>
<text x="566.60" y="286.40" font-size="10.8" fill="#474747" text-anchor="end" textLength="32.54" lengthAdjust="spacingAndGlyphs">19,491</text>
<text x="682.00" y="286.40" font-size="10.8" fill="#474747" text-anchor="end" textLength="41.41" lengthAdjust="spacingAndGlyphs">3,784.56</text>
<text x="797.20" y="286.40" font-size="10.8" fill="#474747" text-anchor="end" textLength="20.49" lengthAdjust="spacingAndGlyphs">0.04</text>
<text x="341.80" y="305.20" font-size="10.8" fill="#474747" textLength="90.80" lengthAdjust="spacingAndGlyphs">İş Ortaklığı Reklamı</text>
<text x="566.60" y="305.20" font-size="10.8" fill="#474747" text-anchor="end" textLength="32.54" lengthAdjust="spacingAndGlyphs">16,759</text>
<text x="682.00" y="305.20" font-size="10.8" fill="#474747" text-anchor="end" textLength="41.41" lengthAdjust="spacingAndGlyphs">1,501.26</text>
<text x="797.20" y="305.20" font-size="10.8" fill="#474747" text-anchor="end" textLength="20.49" lengthAdjust="spacingAndGlyphs">0.04</text>
<text x="341.80" y="324.00" font-size="10.8" fill="#474747" textLength="85.30" lengthAdjust="spacingAndGlyphs">Sigorta Reklamları</text>
<text x="566.60" y="324.00" font-size="10.8" fill="#474747" text-anchor="end" textLength="32.54" lengthAdjust="spacingAndGlyphs">12,528</text>
<text x="682.00" y="324.00" font-size="10.8" fill="#474747" text-anchor="end" textLength="41.41" lengthAdjust="spacingAndGlyphs">2,751.35</text>
<text x="797.20" y="324.00" font-size="10.8" fill="#474747" text-anchor="end" textLength="20.49" lengthAdjust="spacingAndGlyphs">0.05</text>
<text x="341.80" y="342.80" font-size="10.8" fill="#474747" textLength="106.10" lengthAdjust="spacingAndGlyphs">TSS - GDN Kampanyası</text>
<text x="566.60" y="342.80" font-size="10.8" fill="#474747" text-anchor="end" textLength="31.75" lengthAdjust="spacingAndGlyphs">11,916</text>
<text x="682.00" y="342.80" font-size="10.8" fill="#474747" text-anchor="end" textLength="5.92" lengthAdjust="spacingAndGlyphs">0</text>
<text x="797.20" y="342.80" font-size="10.8" fill="#474747" text-anchor="end" textLength="20.49" lengthAdjust="spacingAndGlyphs">0.02</text>
<text x="341.80" y="361.60" font-size="10.8" fill="#474747" textLength="106.70" lengthAdjust="spacingAndGlyphs">Maks. Performans (P...</text>
<text x="566.60" y="361.60" font-size="10.8" fill="#474747" text-anchor="end" textLength="26.62" lengthAdjust="spacingAndGlyphs">4,979</text>
<text x="682.00" y="361.60" font-size="10.8" fill="#474747" text-anchor="end" textLength="5.92" lengthAdjust="spacingAndGlyphs">0</text>
<text x="797.20" y="361.60" font-size="10.8" fill="#474747" text-anchor="end" textLength="20.49" lengthAdjust="spacingAndGlyphs">0.04</text>
<text x="341.80" y="380.40" font-size="10.8" fill="#474747" textLength="103.00" lengthAdjust="spacingAndGlyphs">İsag Website traffic-...</text>
<text x="566.60" y="380.40" font-size="10.8" fill="#474747" text-anchor="end" textLength="26.62" lengthAdjust="spacingAndGlyphs">4,772</text>
<text x="682.00" y="380.40" font-size="10.8" fill="#474747" text-anchor="end" textLength="5.92" lengthAdjust="spacingAndGlyphs">3</text>
<text x="797.20" y="380.40" font-size="10.8" fill="#474747" text-anchor="end" textLength="20.49" lengthAdjust="spacingAndGlyphs">0.07</text>
<text x="341.80" y="399.20" font-size="10.8" fill="#474747" textLength="107.30" lengthAdjust="spacingAndGlyphs">Arama Ağı Reklamlar...</text>
<text x="566.60" y="399.20" font-size="10.8" fill="#474747" text-anchor="end" textLength="26.62" lengthAdjust="spacingAndGlyphs">2,507</text>
<text x="682.00" y="399.20" font-size="10.8" fill="#474747" text-anchor="end" textLength="5.92" lengthAdjust="spacingAndGlyphs">0</text>
<text x="797.20" y="399.20" font-size="10.8" fill="#474747" text-anchor="end" textLength="20.49" lengthAdjust="spacingAndGlyphs">0.01</text>
<text x="341.80" y="418.00" font-size="10.8" fill="#474747" textLength="107.30" lengthAdjust="spacingAndGlyphs">İsag Leads-Search 04...</text>
<text x="566.60" y="418.00" font-size="10.8" fill="#474747" text-anchor="end" textLength="26.62" lengthAdjust="spacingAndGlyphs">1,045</text>
<text x="682.00" y="418.00" font-size="10.8" fill="#474747" text-anchor="end" textLength="5.92" lengthAdjust="spacingAndGlyphs">0</text>
<text x="797.20" y="418.00" font-size="10.8" fill="#474747" text-anchor="end" textLength="20.49" lengthAdjust="spacingAndGlyphs">0.03</text>
<text x="341.80" y="436.80" font-size="10.8" fill="#474747" textLength="105.20" lengthAdjust="spacingAndGlyphs">Video Reklamları (Yo...</text>
<text x="566.60" y="436.80" font-size="10.8" fill="#474747" text-anchor="end" textLength="17.75" lengthAdjust="spacingAndGlyphs">460</text>
<text x="682.00" y="436.80" font-size="10.8" fill="#474747" text-anchor="end" textLength="5.92" lengthAdjust="spacingAndGlyphs">0</text>
<text x="797.20" y="436.80" font-size="10.8" fill="#474747" text-anchor="end" textLength="5.86" lengthAdjust="spacingAndGlyphs">0</text>
<text x="26.60" y="489.40" font-size="11.8" fill="#333" textLength="109.00" lengthAdjust="spacingAndGlyphs">Conversions by Date</text>
<text x="426.70" y="489.60" font-size="11.8" fill="#333">Conversion rate % by Date</text>
<text x="337.60" y="507.20" font-size="8.9" fill="#333" textLength="49.10" lengthAdjust="spacingAndGlyphs">Conversions</text>
<text x="714.00" y="507.20" font-size="8.9" fill="#333" textLength="72.90" lengthAdjust="spacingAndGlyphs">Conversion rate %</text>
<text x="38.20" y="519.30" font-size="8.8" fill="#2e2e2e" text-anchor="end" textLength="8.50" lengthAdjust="spacingAndGlyphs">80</text>
<text x="38.20" y="552.40" font-size="8.8" fill="#2e2e2e" text-anchor="end" textLength="8.50" lengthAdjust="spacingAndGlyphs">60</text>
<text x="38.20" y="586.00" font-size="8.8" fill="#2e2e2e" text-anchor="end" textLength="8.50" lengthAdjust="spacingAndGlyphs">40</text>
<text x="441.20" y="519.40" font-size="8.8" fill="#2e2e2e" text-anchor="end" textLength="15.30" lengthAdjust="spacingAndGlyphs">0.25</text>
<text x="441.20" y="546.00" font-size="8.8" fill="#2e2e2e" text-anchor="end" textLength="10.80" lengthAdjust="spacingAndGlyphs">0.2</text>
<text x="441.20" y="572.60" font-size="8.8" fill="#2e2e2e" text-anchor="end" textLength="15.30" lengthAdjust="spacingAndGlyphs">0.15</text>
<text x="441.20" y="599.20" font-size="8.8" fill="#2e2e2e" text-anchor="end" textLength="10.80" lengthAdjust="spacingAndGlyphs">0.1</text></svg>
</body></html>
